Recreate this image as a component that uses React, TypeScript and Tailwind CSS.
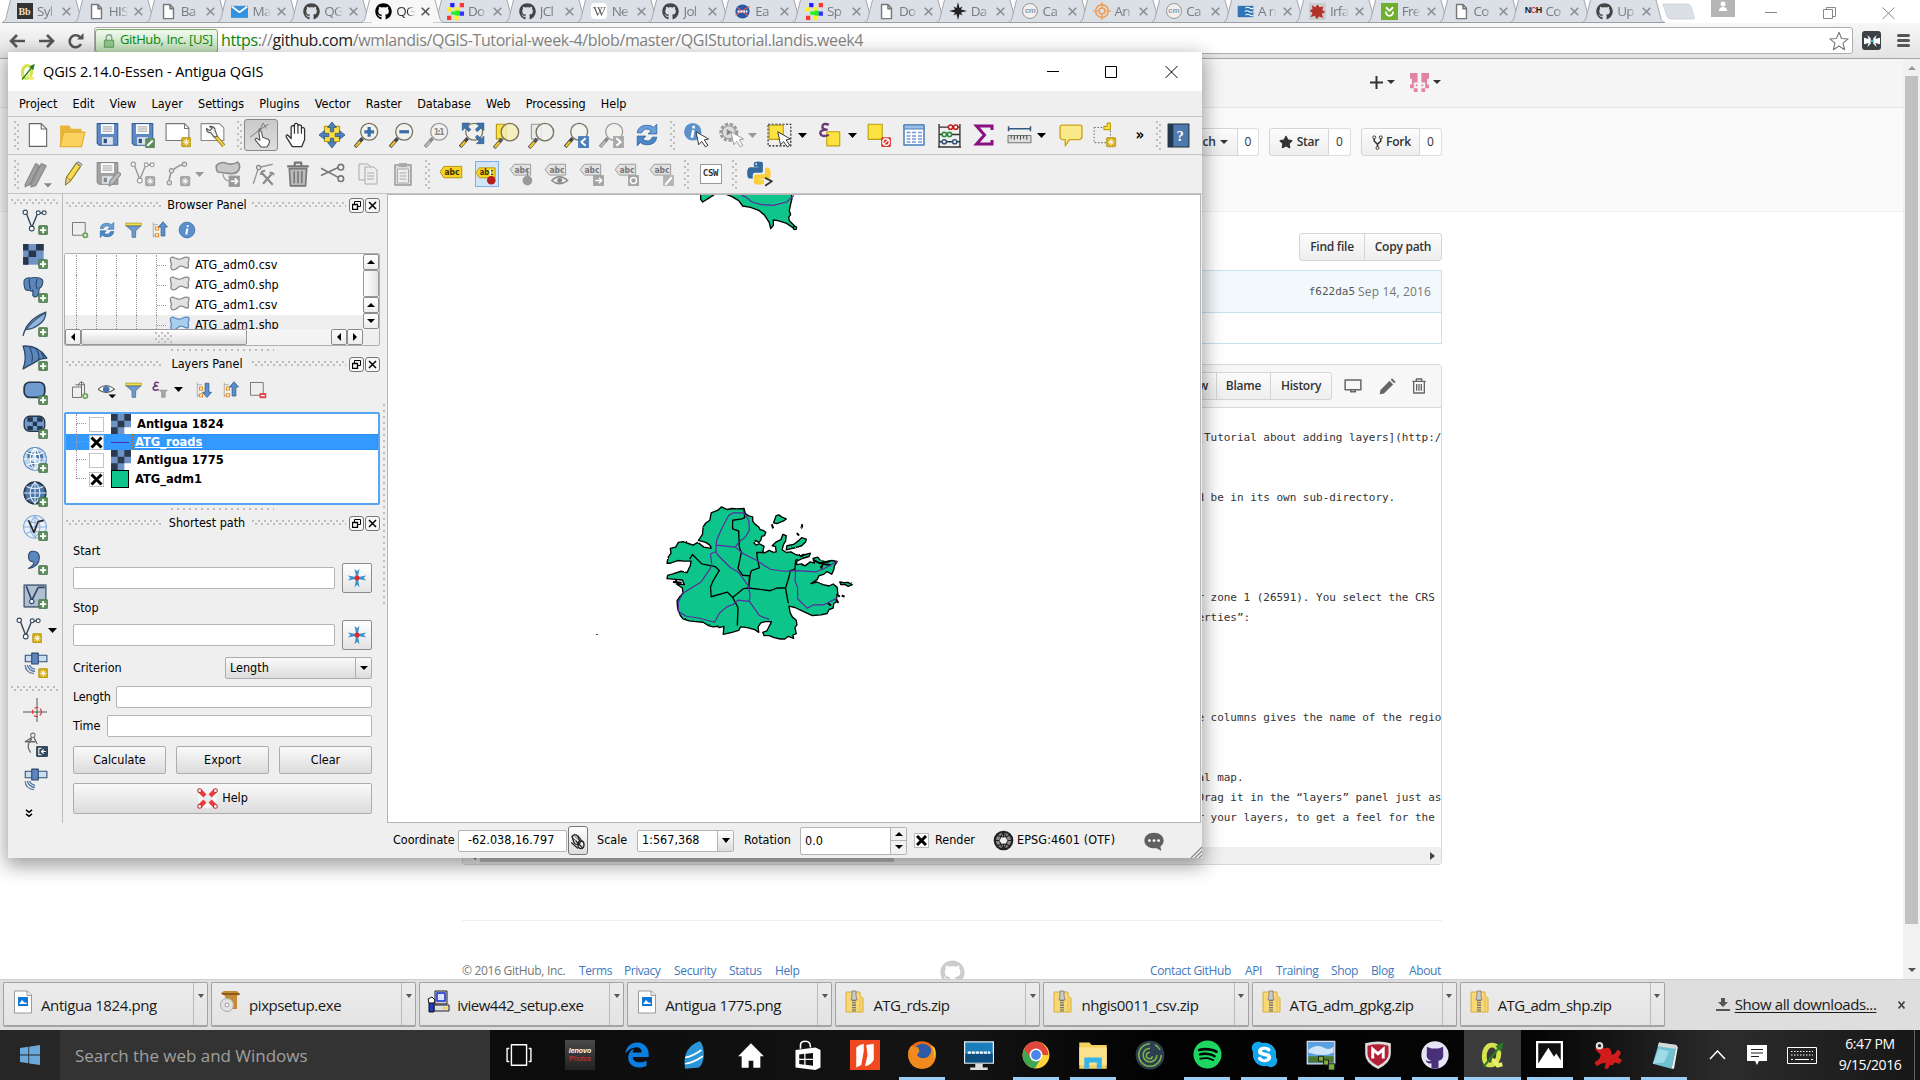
import React from "react";
import { FaGithub, FaWikipediaW, FaSpotify, FaSkype, FaEdgeLegacy, FaStar } from "react-icons/fa";

type Kids = { children?: React.ReactNode };

/* ---------- shared bits ---------- */

function I({ s = 26, vb = "0 0 24 24", children, className = "" }: Kids & { s?: number; vb?: string; className?: string }) {
  return (
    <svg width={s} height={s} viewBox={vb} fill="none" strokeLinejoin="round" className={"shrink-0 " + className}>
      {children}
    </svg>
  );
}

const Plus = ({ x = 15, y = 15 }: { x?: number; y?: number }) => (
  <g transform={`translate(${x} ${y})`}>
    <rect x="0.3" y="0.3" width="8.4" height="8.4" rx="1" fill="#5b8c5a" stroke="#3f6f45" strokeWidth=".6" />
    <path d="M4.5 1.6v5.8M1.6 4.5h5.8" stroke="#fff" strokeWidth="1.8" />
  </g>
);
const Sun = ({ gray = false, x = 15, y = 15 }: { gray?: boolean; x?: number; y?: number }) => (
  <g transform={`translate(${x} ${y})`}>
    <rect x="0.3" y="0.3" width="8.6" height="8.6" rx="1" fill={gray ? "#a5a5a5" : "#d0aa10"} stroke={gray ? "#8c8c8c" : "#a88605"} strokeWidth=".5" />
    <path d="M4.6 1.4v6.4M1.4 4.6h6.4M2.4 2.4l4.4 4.4M6.8 2.4L2.4 6.8" stroke="#fff" strokeWidth=".9" />
  </g>
);
const Cursor = ({ x = 12, y = 9, gray = false }: { x?: number; y?: number; gray?: boolean }) => (
  <path transform={`translate(${x} ${y})`} d="M0 0l2.5 12 2.8-3 3.5 5 2.2-1.5-3.4-5 4-.8z" fill="#fff" stroke={gray ? "#999" : "#333"} strokeWidth=".9" />
);

function Down({ gray = false }: { gray?: boolean }) {
  return (
    <span className="flex w-4 shrink-0 items-center justify-start">
      <svg width="10" height="5" viewBox="0 0 10 5"><path d="M0 0h9l-4.500 5z" fill={gray ? "#999" : "#000"} /></svg>
    </span>
  );
}

const Cell = ({ children }: Kids) => <span className="flex h-9 w-[35px] shrink-0 items-center justify-center">{children}</span>;

const dots =
  "bg-[radial-gradient(circle_at_1px_1px,#bdbdbd_0.9px,transparent_1.3px),radial-gradient(circle_at_4px_4px,#bdbdbd_0.9px,transparent_1.3px)] bg-[length:6px_6px]";
const VGrip = ({ className = "" }: { className?: string }) => <span className={`h-[29px] w-[6px] shrink-0 ${dots} ${className}`} />;
const HGrip = ({ className = "h-[6px]" }: { className?: string }) => <span className={`shrink-0 ${dots} ${className}`} />;

/* ---------- browser tabs ---------- */

const Doc = () => <I s={17}><path d="M5 2h9l5 5.500V22H5zM14 2v6h5" stroke="#777" strokeWidth="2" fill="#fff" /></I>;
const Hub = ({ c = "#444" }: { c?: string }) => <FaGithub size={17} color={c} />;
const Checks = () => (
  <I s={17} vb="0 0 16 16">
    <path d="M3 0h4v4H3z" fill="#22f" /><path d="M12 0h4v4h-4z" fill="#f33" />
    <path d="M0 4h4v4H0zM7 4h4v4H7z" fill="#fe2" /><path d="M4 8h4v3H4zM8 7h4v5H8z" fill="#2e2" />
    <path d="M12 8h4v4h-4z" fill="#33f" /><path d="M0 12h4v4H0z" fill="#f33" /><path d="M7 12h4v4H7z" fill="#fe2" />
  </I>
);
const Cm = () => <span className="flex h-4 w-4 items-center justify-center rounded-full border border-[#999] bg-[#f4efec] font-['Liberation_Sans'] text-[8px] font-bold tracking-tighter text-[#8aa0b0]">cm</span>;

const tabs: { t: string; icon: React.ReactNode; active?: boolean }[] = [
  { t: "Syl", icon: <span className="flex h-4 w-4 items-center justify-center bg-[#333] font-['Liberation_Serif'] text-[10px] font-bold text-[#f5dfb8]">Bb</span> },
  { t: "HIS", icon: <Doc /> },
  { t: "Ba", icon: <Doc /> },
  { t: "Ma", icon: <I s={17}><path d="M0 4h24v17H0z" fill="#3192e0" /><path d="M1 5l11 8 11-8" stroke="#fff" strokeWidth="2.500" /></I> },
  { t: "QG", icon: <Hub /> },
  { t: "QG", icon: <Hub c="#000" />, active: true },
  { t: "Do", icon: <Checks /> },
  { t: "JCl", icon: <Hub /> },
  { t: "Ne", icon: <span className="flex h-4 w-4 items-center justify-center rounded bg-white"><FaWikipediaW size={13} color="#444" /></span> },
  { t: "Jol", icon: <Hub /> },
  { t: "Ea", icon: <I s={17}><circle cx="12" cy="12" r="10" fill="#2758a8" /><path d="M2 17L22 5M4 6l16 12" stroke="#e65a5a" strokeWidth="1.500" /><path d="M5 12h14" stroke="#fff" strokeWidth="3" strokeDasharray="3 1" /></I> },
  { t: "Sp", icon: <Checks /> },
  { t: "Do", icon: <Doc /> },
  { t: "Da", icon: <I s={18}><path d="M12 0l2 8 4-2-2 4 8 2-8 2 2 4-4-2-2 8-2-8-4 2 2-4-8-2 8-2-2-4 4 2z" fill="#222" /></I> },
  { t: "Ca", icon: <Cm /> },
  { t: "An", icon: <I s={18}><circle cx="12" cy="12" r="8.500" stroke="#ef9a4d" strokeWidth="2" /><circle cx="12" cy="12" r="4" stroke="#ef9a4d" strokeWidth="2" /><path d="M12 0v7M12 17v7M0 12h7M17 12h7" stroke="#ef9a4d" strokeWidth="1.600" /></I> },
  { t: "Ca", icon: <Cm /> },
  { t: "A n", icon: <I s={17}><path d="M1 4h22v16H1z" fill="#2f74b5" /><path d="M12 7q3-2 6 0t5 0M11 12q3-2 6 0t5 0M12 17q3-2 6 0t5 0" stroke="#fff" strokeWidth="1.500" /></I> },
  { t: "Irfa", icon: <I s={17}><path d="M0 0h24v24H0z" fill="#ccc" /><path d="M4 3l5 3 3-4 3 4 5-1-1 5 4 3-5 2 2 6-6-2-3 4-3-5-6 2 3-6-4-3 4-3z" fill="#b4312b" /></I> },
  { t: "Fre", icon: <I s={17}><path d="M0 0h24v24H0z" fill="#70ae2e" /><path d="M7 6l5 5 5-5M7 12q0 6 5 6t5-6" stroke="#fff" strokeWidth="2.500" /></I> },
  { t: "Co", icon: <Doc /> },
  { t: "Co", icon: <span className="font-['Liberation_Sans'] text-[9px] font-bold tracking-[-1px] text-[#222]">N<span className="text-[#e2403b]">C</span>H</span> },
  { t: "Up", icon: <Hub /> },
];

function TabStrip() {
  return (
    <div className="flex h-[23px] shrink-0 overflow-hidden bg-white pl-[2px]">
      {tabs.map((t, i) => (
        <div key={i} className={"relative h-[23px] w-[71.830px] shrink-0 " + (t.active ? "z-10" : "")}>
          <svg className="absolute left-0 top-0" width="83" height="23" viewBox="0 0 83 23">
            <path d="M0 22.500C3 22 4 19 5 14L8.500 0H74l4 15c1 5 2 7 5 7.500z" fill={t.active ? "#f7f7f7" : "#dbdfe6"} />
            <path d="M0 22.500C3 22 4 19 5 14L8.500 0M74 0l4 15c1 5 2 7 5 7.500" fill="none" stroke="#a3a6aa" />
            {!t.active && <path d="M0 22.500h83" stroke="#9c9ea1" />}
          </svg>
          <div className="relative flex h-[22px] items-center pl-[14px]">
            <span className="flex w-[17px] shrink-0 items-center justify-center">{t.icon}</span>
            <span className={"ml-1 w-[19px] shrink-0 overflow-hidden whitespace-nowrap font-['Open_Sans'] text-[13.500px] tracking-[-0.7px] [mask-image:linear-gradient(90deg,#000_60%,transparent)] " + (t.active ? "text-[#333]" : "text-[#777b82]")}>{t.t}</span>
            <svg className="ml-[6px] shrink-0" width="9" height="9" viewBox="0 0 9 9"><path d="M.7.7l7.600 7.600M8.300.7L.7 8.300" stroke={t.active ? "#555" : "#8b8e93"} strokeWidth="1.600" /></svg>
          </div>
        </div>
      ))}
      <svg className="ml-[8px] mt-[3px] shrink-0" width="34" height="17" viewBox="0 0 34 17"><path d="M1 1h24q3 0 4 3l3.500 11q0 1-2 1H9q-3 0-4-3L1 1z" fill="#dbdfe6" stroke="#d0d4da" /></svg>
      <div className="ml-[15px] h-[17px] w-6 shrink-0 bg-[#b5b5b5]"><I s={24} vb="0 2 24 24"><circle cx="12" cy="6" r="2.500" fill="#fff" /><path d="M8 13q0-4 4-4t4 4z" fill="#fff" /></I></div>
      <svg className="ml-[30px] mt-[4px] shrink-0" width="130" height="16" viewBox="0 0 130 16" fill="none" stroke="#888"><path d="M0 8.500h12M58.500 5.500h9v9h-9zM61.500 5v-1.500h9v9h-2.500M117.500 3.500l12 11.500M129.500 3.500l-12 11.500" /></svg>
    </div>
  );
}

function AddressBar() {
  return (
    <div className="flex h-9 shrink-0 items-center border-b border-[#a5a5a5] bg-gradient-to-b from-[#f7f7f7] to-[#e4e4e4]">
      <svg className="ml-[9px] shrink-0" width="76" height="18" viewBox="0 0 76 18" fill="none" stroke="#555" strokeWidth="2.600">
        <path d="M16 9H2M8 3L2 9l6 6M30 9h14M38 3l6 6-6 6" /><path d="M72 12a6 6 0 1 1-.6-6.500" /><path d="M74.500 1v6.500H68z" fill="#555" stroke="none" />
      </svg>
      <div className="ml-[9px] flex h-[27px] w-[1759px] shrink-0 items-center rounded-[3px] border border-[#acacac] bg-white">
        <span className="flex h-[24px] w-[123px] items-center rounded-[3px] border border-[#6fae5c] bg-gradient-to-b from-[#f1f8ef] to-[#bfe0b6] pl-[6px]">
          <I s={14} vb="0 0 14 18"><path d="M3.500 8V4.500a3.500 3.500 0 0 1 7 0V8" stroke="#84a884" strokeWidth="1.800" /><path d="M1 8h12v9H1z" fill="#8fc78a" stroke="#4a8a45" /></I>
          <span className="ml-[4px] whitespace-nowrap pb-px font-['Open_Sans'] text-[13px] tracking-[-0.4px] text-[#0b8a0b]">GitHub, Inc. [US]</span>
        </span>
        <span className="ml-[3px] grow whitespace-nowrap pb-[2px] font-['Open_Sans'] text-[16px] tracking-[-0.39px] text-[#848484]">
          <span className="text-[#0b8a0b]">https</span>://<span className="text-[#222]">github.com</span>/wmlandis/QGIS-Tutorial-week-4/blob/master/QGIStutorial.landis.week4
        </span>
        <I s={20} className="mr-[3px]"><path d="M12 1.500l3 7.500 8 .5-6.200 5 2 8L12 18l-6.800 4.500 2-8L1 9.500 9 9z" stroke="#777" strokeWidth="1.300" /></I>
      </div>
      <span className="ml-[9px] flex h-[19px] w-[19px] items-center justify-center rounded-[3px] bg-[#3d4145]"><I s={16}><path d="M0 7l7 2-2-6 5 5v8l-5 5 2-6-7 2zM24 7l-7 2 2-6-5 5v8l5 5-2-6 7 2z" fill="#fff" /><circle cx="12" cy="12" r="2" fill="#3bc" /></I></span>
      <span className="ml-4 flex w-[13px] flex-col gap-[2px]"><i className="h-[3px] rounded bg-[#555]" /><i className="h-[3px] rounded bg-[#555]" /><i className="h-[3px] rounded bg-[#555]" /></span>
    </div>
  );
}

/* ---------- web page ---------- */

const ghBtn = "flex items-center justify-center border border-[#d5d5d5] bg-gradient-to-b from-[#fcfcfc] to-[#eee] font-['Open_Sans'] text-[12px] font-semibold text-[#333] whitespace-nowrap tracking-[-0.25px]";
const Caret = () => <svg className="ml-1" width="8" height="4" viewBox="0 0 8 4"><path d="M0 0h8L4 4z" fill="#333" /></svg>;

const code = [
  "[Tutorial about adding layers](http:/", "", "", "d be in its own sub-directory.", "", "", "", "",
  "r zone 1 (26591). You select the CRS (", "erties”:", "", "", "", "", "e columns gives the name of the regio", "", "",
  "al map.", "Drag it in the “layers” panel just as", "r your layers, to get a feel for the ", "",
];

function WebPage() {
  return (
    <div className="flex h-[920px] shrink-0 overflow-hidden bg-white">
      <div className="flex h-[920px] w-[1903px] shrink-0 flex-col">
        <div className="flex h-[49px] shrink-0 items-center border-b border-[#e5e5e5] bg-[#f5f5f5] pb-[2px] pl-[1370px]">
          <svg width="13" height="13" viewBox="0 0 13 13"><path d="M6.500 0v13M0 6.500h13" stroke="#333" strokeWidth="2" /></svg>
          <Caret />
          <svg className="ml-[15px]" width="19" height="19" viewBox="0 0 10 10" fill="#df84a3"><path d="M0 0h4v3H0zM6 0h4v3H6zM1 3h3v2H2v1H1zM6 3h3v3H8V5H6zM0 6h2v2H0zM8 6h2v2H8zM2 8h2v2H2zM6 8h2v2H6zM3 6h1v1H3zM6 6h1v1H6z" /></svg>
          <Caret />
        </div>
        <div className="flex h-[104px] shrink-0 items-start border-b border-[#eee] bg-[#fafafa] pt-5">
          <div className={ghBtn + " ml-[1160px] h-7 w-[78px] pl-[32px]"}>ch<Caret /></div>
          <div className="flex h-7 w-[21px] items-center justify-center rounded-r-[3px] border border-l-0 border-[#ddd] bg-white font-['Open_Sans'] text-[12px] text-[#333]">0</div>
          <div className={ghBtn + " ml-[10px] h-7 w-[60px] gap-1 rounded-l-[3px]"}><FaStar size={14} />Star</div>
          <div className="flex h-7 w-[22px] items-center justify-center rounded-r-[3px] border border-l-0 border-[#ddd] bg-white font-['Open_Sans'] text-[12px] text-[#333]">0</div>
          <div className={ghBtn + " ml-[10px] h-7 w-[59px] gap-px rounded-l-[3px]"}>
            <I s={15} vb="0 0 12 16"><path d="M2.500 4v2.500L6 10v2.500M9.500 4v2.500L6 10" stroke="#333" strokeWidth="1.600" /><circle cx="2.500" cy="2.500" r="1.600" stroke="#333" /><circle cx="9.500" cy="2.500" r="1.600" stroke="#333" /><circle cx="6" cy="13.800" r="1.600" stroke="#333" /></I>Fork
          </div>
          <div className="flex h-7 w-[22px] items-center justify-center rounded-r-[3px] border border-l-0 border-[#ddd] bg-white font-['Open_Sans'] text-[12px] text-[#333]">0</div>
        </div>
        <div className="ml-[462px] flex w-[980px] flex-col">
          <div className="mt-[21px] flex h-[28px] justify-end">
            <div className={ghBtn + " w-[66px] rounded-l-[3px]"}>Find file</div>
            <div className={ghBtn + " -ml-px w-[78px] rounded-r-[3px]"}>Copy path</div>
          </div>
          <div className="mt-[9px] flex h-[74px] flex-col border border-[#c5e2ef]">
            <div className="flex h-[42px] items-center justify-end border-b border-[#c5e2ef] bg-[#f2f9fc] pr-[10px] text-[12px] text-[#767676]">
              <span className="mr-[3px] pt-[2px] font-['DejaVu_Sans_Mono'] text-[11px] text-[#555]">f622da5</span>
              <span className="font-['Open_Sans'] text-[12px] tracking-[0.15px]">Sep 14, 2016</span>
            </div>
          </div>
          <div className="mt-5 flex h-[501px] flex-col rounded-[3px] border border-[#d8d8d8]">
            <div className="flex h-[43px] shrink-0 items-center justify-end border-b border-[#d8d8d8] bg-[#f7f7f7] pr-[14px]">
              <div className={ghBtn + " h-7 w-[60px] justify-end pr-2"}>Raw</div>
              <div className={ghBtn + " -ml-px h-7 w-[55px]"}>Blame</div>
              <div className={ghBtn + " -ml-px h-7 w-[62px] rounded-r-[3px]"}>History</div>
              <I s={18} className="ml-[12px]"><path d="M1.500 4h21v13h-21zM9 17v2.500h6V17" stroke="#666" strokeWidth="2" /></I>
              <I s={17} className="ml-[17px]"><path d="M1 23l1-6L15 4l5 5L7 22zM16.500 2.500l2-2 5 5-2 2z" fill="#666" /></I>
              <I s={16} className="ml-[15px]"><path d="M2 5h20M8 4V1.500h8V4M4 5v17.500h16V5M8.500 9v10M12 9v10M15.500 9v10" stroke="#666" strokeWidth="2" /></I>
            </div>
            <div className="h-[439px] shrink-0 overflow-hidden pl-[734.400px] pt-[20px] font-['DejaVu_Sans_Mono'] text-[11px] leading-[20px] tracking-[-0.03px] text-[#333]">
              {code.map((l, i) => <div key={i} className="h-5 whitespace-pre">{l}</div>)}
            </div>
            <div className="flex h-[17px] items-center bg-[#f0f0f0] pl-2">
              <svg width="5" height="8"><path d="M5 0v8L0 4z" fill="#555" /></svg>
              <span className="ml-1 h-[13px] w-[414px] bg-[#c1c1c1]" />
              <svg className="ml-auto mr-[6px]" width="5" height="8"><path d="M0 0v8l5-4z" fill="#444" /></svg>
            </div>
          </div>
          <div className="mt-[55px] flex h-[102px] items-end border-t border-[#eee] font-['Open_Sans'] text-[12px] text-[#4078c0]">
            <div className="flex h-[60px] w-full items-start">
              <span className="w-[117px] whitespace-nowrap tracking-[-0.3px] text-[#767676]">© 2016 GitHub, Inc.</span>
              <span className="w-[45px] tracking-[-0.4px]">Terms</span><span className="w-[50px] tracking-[-0.45px]">Privacy</span><span className="w-[55px] tracking-[-0.3px]">Security</span><span className="w-[46px] tracking-[-0.4px]">Status</span><span className="w-[165px] tracking-[-0.4px]">Help</span>
              <FaGithub size={25} color="#ccc" className="-mt-[2px]" />
              <span className="ml-auto w-[95px] whitespace-nowrap tracking-[-0.35px]">Contact GitHub</span><span className="w-[31px] tracking-[-0.4px]">API</span><span className="w-[55px] tracking-[-0.4px]">Training</span><span className="w-[40px] tracking-[-0.4px]">Shop</span><span className="w-[38px] tracking-[-0.4px]">Blog</span><span className="w-[33px] tracking-[-0.4px]">About</span>
            </div>
          </div>
        </div>
      </div>
      <div className="flex w-[17px] shrink-0 flex-col items-center bg-[#f1f1f1]">
        <svg className="mt-[7px]" width="8" height="4"><path d="M0 4h8L4 0z" fill="#999" /></svg>
        <span className="mt-[6px] h-[848px] w-[13px] bg-[#c1c1c1]" />
        <svg className="mt-[44px]" width="8" height="4"><path d="M0 0h8L4 4z" fill="#555" /></svg>
      </div>
    </div>
  );
}

/* ---------- downloads shelf ---------- */

const Png = () => <I s={24}><path d="M3.500 1h13l4 4v18h-17z" fill="#fff" stroke="#999" /><path d="M16 1v4.500h4.500" stroke="#999" fill="#eee" /><path d="M7 7h10v9H7z" fill="#0a78d6" /><path d="M8 14l3-4 3 3 1-1 1 2z" fill="#fff" /></I>;
const Zip = () => <I s={24}><path d="M3 2h14v4l3 2v14H3z" fill="#f8d775" stroke="#d8ae3c" /><path d="M17 8v14" stroke="#e4bd50" /><path d="M9 1h4v5l1 4h-6l1-4z" fill="#ccc" stroke="#777" strokeWidth=".8" /><path d="M11 10v12" stroke="#777" strokeWidth="4" strokeDasharray="1.300 1" /></I>;
const Setup = () => <I s={24}><path d="M2 3l3-2h13l3 3-3 2v13H9L6 6z" fill="#c58a34" /><path d="M2 3h18l1 2H4z" fill="#8d5b18" /><circle cx="8" cy="15" r="6.500" fill="#e2e2e2" stroke="#aaa" /><circle cx="8" cy="15" r="2" fill="#fff" stroke="#999" /></I>;
const Pc = () => <I s={24}><path d="M8 1h12v13H8z" fill="#ccc" stroke="#222" /><path d="M10 3h8v8h-8z" fill="#dfe3ff" stroke="#1730d8" strokeWidth="1.500" /><path d="M7 15h15v6H7z" fill="#ddd" stroke="#222" /><path d="M2 12h5v10H2z" fill="#2438d0" stroke="#111" /><path d="M1 9l4-2 3 3-1 3H2z" fill="#fff" stroke="#111" /><path d="M16 18h4" stroke="#fc0" strokeWidth="1.500" /></I>;

const downloads: [string, React.ReactNode, string][] = [
  ["Antigua 1824.png", <Png />, "tracking-[-0.4px]"], ["pixpsetup.exe", <Setup />, "tracking-[-0.45px]"], ["iview442_setup.exe", <Pc />, "tracking-[-0.5px]"], ["Antigua 1775.png", <Png />, "tracking-[-0.4px]"],
  ["ATG_rds.zip", <Zip />, "tracking-[-0.5px]"], ["nhgis0011_csv.zip", <Zip />, "tracking-[-0.42px]"], ["ATG_adm_gpkg.zip", <Zip />, "tracking-[-0.4px]"], ["ATG_adm_shp.zip", <Zip />, "tracking-[-0.6px]"],
];

function Shelf() {
  return (
    <div className="flex h-[51px] shrink-0 items-center border-t border-[#cfcfcf] bg-[#dedede] pb-px pl-[3px] font-['Open_Sans'] text-[15px] text-[#1a1a1a]">
      {downloads.map(([n, icon, tr]) => (
        <div key={n} className="mr-[3px] flex h-[45px] w-[205.100px] shrink-0 items-stretch rounded-[2px] border border-b-2 border-[#a3a3a3] bg-gradient-to-b from-[#ececec] to-[#e3e3e3]">
          <span className="flex grow pl-[7px] pt-[7px]">{icon}<span className={"ml-[6px] mt-[5px] whitespace-nowrap leading-5 " + tr}>{n}</span></span>
          <span className="flex w-[14px] justify-center border-l border-[#bbb] pt-[11px]"><svg width="6" height="4"><path d="M0 0h6L3 4z" fill="#555" /></svg></span>
        </div>
      ))}
      <svg className="ml-[48px] shrink-0" width="14" height="16" viewBox="0 0 14 16"><path d="M5 1h4v4h3L7 10 2 5h3zM0 12h14v2H0z" fill="#555" /></svg>
      <span className="ml-[5px] whitespace-nowrap tracking-[-0.4px] underline underline-offset-2">Show all downloads...</span>
      <svg className="ml-[22px] shrink-0" width="7" height="8" viewBox="0 0 7 8"><path d="M.5.5l6 7M6.500.5l-6 7" stroke="#444" strokeWidth="1.600" /></svg>
    </div>
  );
}

/* ---------- taskbar ---------- */

const QLogo = ({ s = 28 }: { s?: number }) => (
  <I s={s}><path d="M11 3.500C7 3.500 4.500 8 4.500 13s2 7.500 5 7.500c5 0 7.500-5 7.500-10 0-4-2-7-6-7z" stroke="#d4e34e" strokeWidth="4.200" /><path d="M11 16q3 1 5 5l4-1" stroke="#e9ef6a" strokeWidth="3.500" /><path d="M4 22L17 6" stroke="#2b7a22" strokeWidth="1.800" /><path d="M21 1l-7 3.500 5 5z" fill="#2b7a22" /></I>
);

const apps: { icon: React.ReactNode; run?: boolean; active?: boolean }[] = [
  { icon: <I s={26}><path d="M5 2.500h14v19H5zM3 6H1v12h2M21 6h2v12h-2" stroke="#fff" strokeWidth="1.300" /></I> },
  { icon: <span className="flex h-[30px] w-[30px] flex-col items-center justify-center bg-gradient-to-b from-[#4a4a4a] to-[#222] font-['Liberation_Sans'] text-[7px] font-bold italic leading-[8px] text-white">lenovo<span className="font-normal not-italic text-[#d33]">Photos</span></span> },
  { icon: <FaEdgeLegacy size={26} color="#0b7fe0" /> },
  { icon: <I s={30}><path d="M5 23C3 14 6 4 17 1c4 5 4 17-1 21z" fill="#2c95d8" /><path d="M5 14q6-1 13-6M5 19q7-1 14-6" stroke="#fff" strokeWidth="1.300" /></I> },
  { icon: <I s={28}><path d="M12 2L1 13h3v10h6v-6h4v6h6V13h3z" fill="#fff" /></I> },
  { icon: <I s={30}><path d="M2 8l16-2 4 2v14l-4 2-16-2z" fill="#fff" /><path d="M6 7V4q0-3 4-3t4 5" stroke="#fff" strokeWidth="1.300" /><path d="M5 11.500l4-.5v4H5zM10 11l6-.7V15h-6zM5 16h4v3.700l-4-.5zM10 16h6v4.600l-6-.8z" fill="#111" /></I> },
  { icon: <I s={30}><path d="M0 0h24v24H0z" fill="#f0491f" /><path d="M5 6q2-2 6-3v6l-2 11-4 2zM13 4l6-1v13q-2 4-7 5l2-9z" fill="#fff" /></I> },
  { run: true, icon: <I s={30}><circle cx="12" cy="12" r="11" fill="#e66a1c" /><circle cx="12.500" cy="10.500" r="7.500" fill="#2b5aa8" /><path d="M1 9Q3 3 5 5l4 1 1 3-2 3q3 4 8 2 5-4 3-10 5 5 4 10-2 9-11 9T1 14z" fill="#f08a1e" /><path d="M19 4q4 5 2 11 3-4 1-9z" fill="#fcd23a" /></I> },
  { icon: <I s={30}><path d="M0 1h24v18H0z" fill="#e8eef2" /><path d="M1 2h22v16H1z" fill="#1b7db9" /><path d="M1 11h22v7H1z" fill="#0d4f80" /><path d="M3 10h18" stroke="#fff" strokeWidth="1.800" strokeDasharray="2.500 .7" /><path d="M9 19h6v3h4v2H5v-2h4z" fill="#ddd" /></I> },
  { run: true, icon: <I s={28}><circle cx="12" cy="12" r="11.500" fill="#fdd23b" /><path d="M12 .5A11.500 11.500 0 0 0 1.700 7l5.200 9.500L12 12h10.500A11.500 11.500 0 0 0 12 .5z" fill="#e1473d" /><path d="M1.700 7A11.500 11.500 0 0 0 11 23.500l5.500-9L7 14z" fill="#3fa652" /><circle cx="12" cy="12" r="5.500" fill="#fff" /><circle cx="12" cy="12" r="4.200" fill="#4a86e8" /></I> },
  { run: true, icon: <I s={30}><path d="M1 2h8l2 2h12v19H1z" fill="#f6cf62" /><path d="M1 6h22v14H1z" fill="#fde28e" /><path d="M5 14h14v9h-4v-5H9v5H5z" fill="#35b4ea" /></I> },
  { icon: <I s={30}><circle cx="12" cy="12" r="11.500" fill="#2c3e50" /><path d="M12 3a9 9 0 1 0 9 9M12 6.500a5.500 5.500 0 1 0 5.500 5.500M16 3.800A9 9 0 0 1 20 8M12 10a2.500 2.500 0 1 0 2 3" stroke="#7fb34a" strokeWidth="1.200" /></I> },
  { run: true, icon: <FaSpotify size={29} color="#1ed760" /> },
  { run: true, icon: <FaSkype size={29} color="#12a5ec" className="[background:radial-gradient(circle,#fff_55%,transparent_56%)]" /> },
  { run: true, icon: <I s={30}><path d="M1 1h22v18H1z" fill="#5aa0e0" stroke="#dde" /><path d="M2 13h20v5H2z" fill="#4a7a2a" /><path d="M2 8q6-5 12-2t8-1v5q-8 4-20 0z" fill="#cfe6fa" /><path d="M10 13h4v4h-4zM14 16h4v4h-4zM18 19h5v5h-5z" fill="#7cae3c" stroke="#222" strokeWidth=".8" /></I> },
  { run: true, icon: <I s={28}><path d="M1 2q11-3 22 0v9q0 8-11 13Q1 19 1 11z" fill="#ddd" /><path d="M3 4q9-2.500 18 0v7q0 6-9 10.500Q3 17 3 11z" fill="#b51f35" /><path d="M7.500 15V7l4.500 4 4.500-4v8" stroke="#fff" strokeWidth="2.500" strokeLinejoin="miter" /></I> },
  { run: true, icon: <I s={28}><circle cx="12" cy="12" r="11.700" fill="#e6e4f5" /><path d="M5 5l4 1.500h6L19 5v5q1 6-4 7v6.500H9V19q-4 1-5-3 2 2 5 1-5-1-4-7z" fill="#48307a" /></I> },
  { active: true, run: true, icon: <QLogo /> },
  { run: true, icon: <I s={27}><path d="M0 0h24v24H0z" fill="#fff" /><path d="M2 2h20v15l-4-6-2 3-5-8-9 14z" fill="#111" /></I> },
  { run: true, icon: <I s={30}><path d="M3 4l4-1 3 4q3-2 5 1l1 4q3-1 4-4 3 0 3 3l-2 3 3 2-2 3-4-1q-1 3-4 2l-1 3h-3l1-5-4 1-3 2-2-3 4-3 1-3-4-4z" fill="#d11c1c" /><circle cx="6" cy="4.500" r="3" fill="#ddd" /><circle cx="6" cy="4.500" r="1.300" fill="#222" /></I> },
  { run: true, icon: <I s={30}><path d="M8 2l14 2-4 19-15-4z" fill="#6fc0d0" /><path d="M8 2l14 2-1 3L7 5z" fill="#d8d8d8" /><path d="M22 4l1 2-3 17-2 0z" fill="#eee" /><path d="M8 7l8 2-4 9-9 1z" fill="#9edbe6" /></I> },
];

function Taskbar() {
  return (
    <div className="flex h-[50px] shrink-0 bg-[linear-gradient(90deg,#1c1c1c_0,#0c0c0c_27%,#141414_50%,#020202_60%,#050505_80%,#2c2c2c_90%,#161616_100%)]">
      <div className="flex w-[60px] shrink-0 items-center justify-center bg-[#262626]">
        <I s={20}><path d="M0 3.500l10-1.400V11.500H0zM11 2l13-2v11.500H11zM0 12.500h10V22L0 20.500zM11 12.500h13V24l-13-1.900z" fill="#6ba9da" /></I>
      </div>
      <div className="flex w-[430px] shrink-0 items-center bg-[#333] pl-[15px] pt-px font-['Open_Sans'] text-[17px] tracking-[-0.03px] text-[#a0a0a0]">Search the web and Windows</div>
      <div className="flex w-[1203px] shrink-0">
        {apps.map((a, i) => (
          <div key={i} className={"flex shrink-0 flex-col items-center " + (i === 0 ? "mr-[4.500px] w-[57px] " : "w-[57.040px] ") + (a.active ? "bg-[#3b3b3b]" : "")}>
            <span className="flex h-[47px] items-center justify-center pt-[2px]">{a.icon}</span>
            {a.run && <span className={"h-[3px] bg-[#9bcdf5] " + (a.active ? "w-full" : "w-[46px]")} />}
          </div>
        ))}
      </div>
      <div className="flex grow items-center text-white">
        <svg className="ml-[16px] shrink-0" width="17" height="10"><path d="M1 9l7.500-8L16 9" stroke="#fff" fill="none" strokeWidth="1.500" /></svg>
        <svg className="ml-[21px] shrink-0" width="20" height="20"><path d="M0 0h20v16h-8l-2 4-2-4H0z" fill="#fff" /><path d="M4 4.500h12M4 8h12M4 11.500h8" stroke="#222" /></svg>
        <svg className="ml-[20px] shrink-0" width="30" height="17" fill="none" stroke="#fff"><path d="M.5.5h29v16H.5z" /><path d="M4 4.500h22M4 8h22" strokeDasharray="1.500 1.500" /><path d="M4 12.500h2M8 12.500h14M24 12.500h2" /></svg>
        <div className="ml-[17px] flex w-[72px] shrink-0 flex-col items-center whitespace-nowrap pb-[3px] font-['Open_Sans'] text-[14px] leading-[21px] tracking-[-0.4px]"><span>6:47 PM</span><span>9/15/2016</span></div>
        <span className="ml-auto h-full w-[6px] border-l border-[#666]" />
      </div>
    </div>
  );
}

/* ---------- QGIS toolbars ---------- */

const Mag = ({ gray = false, fill = "#f1f1ee", children }: Kids & { gray?: boolean; fill?: string }) => (
  <I s={26}>
    <path d="M1 23l7-8" stroke={gray ? "#888" : "#444"} strokeWidth="3.200" /><path d="M1.600 22.500l4-4.500" stroke={gray ? "#bbb" : "#f6c321"} strokeWidth="2" />
    <circle cx="14" cy="9" r="7.800" fill={fill} fillOpacity=".8" stroke={gray ? "#9a9a9a" : "#77715f"} strokeWidth="1.200" />
    {children}
  </I>
);
const Save = ({ gray = false, children }: Kids & { gray?: boolean }) => (
  <I s={26}><path d="M2 1.500h19v20H4l-2-2z" fill={gray ? "#a3a3a3" : "#5d88c4"} stroke={gray ? "#888" : "#345d94"} /><path d="M5.500 2h12v9h-12z" fill="#fff" /><path d="M7 4.500h9M7 6.500h9M7 8.500h9" stroke="#888" strokeWidth=".8" /><path d="M6.500 14h10v7h-10z" fill="#dde3ea" /><path d="M8 15.500h3v4H8z" fill={gray ? "#888" : "#2b4f80"} />{children}</I>
);
const Label = ({ yellow = false, s = 26, children }: Kids & { yellow?: boolean; s?: number }) => (
  <I s={s}>
    <path d={yellow ? "M1 10l3.500-5H21v10.500H4.500z" : "M1 8l4-5h15v10H5z"} fill={yellow ? "#f6d321" : "#e2e2e2"} stroke={yellow ? "#b39515" : "#9a9a9a"} strokeWidth=".9" />
    <text x="5" y={yellow ? 13 : 11} fontSize="8.500" fontWeight="bold" fontFamily="DejaVu Sans Condensed" fill={yellow ? "#3a3000" : "#777"} textLength="14" lengthAdjust="spacingAndGlyphs">abc</text>
    {children}
  </I>
);
const Refresh = ({ s = 26 }: { s?: number }) => <I s={s}><path d="M3 10q1-7 9-7 4 0 6 2l3-3v9h-8l3-3q-6-4-9 2z" fill="#6aa0d8" stroke="#2f66a8" strokeWidth=".8" /><path d="M21 14q-1 7-9 7-4 0-6-2l-3 3v-9h8l-3 3q6 4 9-2z" fill="#4b86c6" stroke="#2f66a8" strokeWidth=".8" /></I>;
const Info = ({ s = 20 }: { s?: number }) => <I s={s}><circle cx="12" cy="12" r="10.500" fill="#5b90cc" stroke="#3a6ba6" /><path d="M13 5.500v2.500M12.500 10l-1.500 8" stroke="#fff" strokeWidth="2.600" /></I>;
const Funnel = () => <I s={17}><path d="M1 3h22v4H1z" fill="#f7df4a" stroke="#a98e12" /><path d="M2 7h20l-7 7v9H10v-9z" fill="#6f9bd1" stroke="#3a618f" /></I>;
const Tree = ({ up = true }: { up?: boolean }) => <I s={18}><path d="M3 2v20M3 5h6M3 19h6" stroke="#999" /><path d="M6 8h4v4H6zM6 17h4v4H6z" fill="#fff" stroke="#f08a1a" strokeWidth="1.600" /><path d={up ? "M16 1l6 7h-3.500v12h-5V8H10z" : "M16 22l6-7h-3.500V3h-5v12H10z"} fill="#5b90cc" stroke="#2f5a90" /></I>;
const VLine = ({ c = "#34495e", children }: Kids & { c?: string }) => <I s={26}><path d="M4 4l5 13 5-12 6-2" stroke={c} strokeWidth="1.300" /><circle cx="3" cy="3" r="2" fill="#fff" stroke={c} /><circle cx="9" cy="18" r="2.200" fill="#fff" stroke={c} /><circle cx="15" cy="3.500" r="1.800" fill="#fff" stroke={c} /><circle cx="20.500" cy="3.500" r="1.800" fill="#fff" stroke={c} />{children}</I>;
const Hand = () => <I s={28}><path d="M8 22l-5-8q-1-2 1-2l3 3V5q1.500-2 2.800 0V3q1.500-2 3 0v1q1.500-1.500 3 0v2q2-1 2.700 1v9l-2.500 6z" fill="#fff" stroke="#333" strokeWidth="1.100" /><path d="M9.800 5v6M12.800 4v7M15.800 6v5" stroke="#333" /></I>;
const Eps = () => <path d="M11 2.500q-6-2-6 2 0 2 4 2.500-6 0-6 3.500 1 4 8 1.500" stroke="#6b3a73" strokeWidth="2.200" />;

function Toolbars() {
  return (
    <>
      <div className="flex h-[39px] shrink-0 items-center border-b border-t border-[#c3c3c3] pb-px">
        <VGrip className="ml-[6px]" />
        <Cell><I><path d="M4 1.500h11l5 5v16H4z" fill="#fff" stroke="#666" /><path d="M15 1.500v5h5" stroke="#666" /></I></Cell>
        <Cell><I s={27}><path d="M1 3h8l2 3h9v16H1z" fill="#e8b73a" /><path d="M4 9h19l-3 13H1z" fill="#fbd25d" stroke="#e0ad2e" /></I></Cell>
        <Cell><Save /></Cell>
        <Cell><Save><rect x="14" y="15" width="9" height="9" rx="1" fill="#5b8c5a" /><path d="M16 22l5-5" stroke="#fff" strokeWidth="2" /></Save></Cell>
        <Cell><I><path d="M1 1.500h17l4 4V17H1z" fill="#fff" stroke="#777" /><path d="M18 1.500V6h4" stroke="#777" /><Sun x={15} y={14} /></I></Cell>
        <Cell><I><path d="M1 1.500h17l4 4V17H1z" fill="#fff" stroke="#888" /><path d="M14 13l8 9" stroke="#8b7120" strokeWidth="3.500" /><path d="M14 13l8 9" stroke="#f2cd45" strokeWidth="2" /><path d="M9 4q5 0 5 4l2 5-3 1-3-4q-4 0-4-4l3 2 2-2z" fill="#eee" stroke="#555" /></I></Cell>
        <VGrip className="ml-[7px] mr-px" />
        <span className="flex h-8 w-[34px] shrink-0 items-center justify-center rounded-[3px] border border-[#888] bg-gradient-to-b from-[#c9c9c9] to-[#dedede]">
          <I s={26}><path d="M12 23l-5-6q-1-2 1-2l3 2-1-8q1-2 2.500 0l1 5 5 2q2 1 1 4l-2 3z" fill="#fff" stroke="#555" /><path d="M2 14l9-7 3-6 3 5M11 7l8-5" stroke="#777" strokeWidth=".9" /><circle cx="11" cy="7" r="1.300" fill="#777" /></I>
        </span>
        <span className="w-px shrink-0" />
        <Cell><Hand /></Cell>
        <Cell><I><path d="M5 4h14v14H5z" fill="#f8df3f" stroke="#b59a10" /><path d="M12 0l4 5h-2.500v4h-3V5H8zM12 24l4-5h-2.500v-4h-3v4H8zM0 12l5-4v2.500h4v3H5V16zM24 12l-5-4v2.500h-4v3h4V16z" fill="#4f7fb8" stroke="#2a5284" strokeWidth=".7" /></I></Cell>
        <Cell><Mag><path d="M14 4.500v9M9.500 9h9" stroke="#3e6ea8" strokeWidth="3" /></Mag></Cell>
        <Cell><Mag><path d="M9.500 9h9" stroke="#3e6ea8" strokeWidth="3" /></Mag></Cell>
        <Cell><Mag gray><text x="9" y="12" fontSize="8" fontFamily="DejaVu Sans Condensed" fontWeight="bold" fill="#888" textLength="10">1:1</text></Mag></Cell>
        <Cell><Mag><path d="M3 1h7L7.500 3.500 11 7 9 9 5.500 5.500 3 8zM23 1v7l-2.500-2.500L17 9l-2-2 3.500-3.500L16 1zM23 20h-7l2.500-2.500L15 14l2-2 3.500 3.500L23 13z" fill="#3e72ad" stroke="#264f80" strokeWidth=".5" /></Mag></Cell>
        <Cell><I s={27}><path d="M3 2h9v13H3z" fill="#f8e045" stroke="#b39a12" /><path d="M1 23l7-8" stroke="#555" strokeWidth="3.200" /><path d="M1.600 22.500l4-4.500" stroke="#f6c321" strokeWidth="2" /><circle cx="15" cy="9" r="7.800" fill="#f3eeb9" fillOpacity=".85" stroke="#77715f" strokeWidth="1.200" /></I></Cell>
        <Cell><I s={27}><path d="M3 2h9v13H3z" fill="#e9e9e9" stroke="#999" /><path d="M1 23l7-8" stroke="#555" strokeWidth="3.200" /><path d="M1.600 22.500l4-4.500" stroke="#f6c321" strokeWidth="2" /><circle cx="15" cy="9" r="7.800" fill="#f1f1ee" fillOpacity=".85" stroke="#77715f" strokeWidth="1.200" /></I></Cell>
        <Cell><Mag><path d="M13 13h10v11H13z" fill="#4a7eb8" /><path d="M20 15l-4 3.500 4 3.500" stroke="#fff" strokeWidth="1.800" /></Mag></Cell>
        <Cell><Mag gray><path d="M13 13h10v11H13z" fill="#a8a8a8" /><path d="M16 15l4 3.500-4 3.500" stroke="#fff" strokeWidth="1.800" /></Mag></Cell>
        <Cell><Refresh /></Cell>
        <VGrip className="ml-[6px] mr-[2px]" />
        <Cell><I s={26}><circle cx="9" cy="9" r="8" fill="#5b90cc" /><path d="M9.800 3.500v2.500M9.500 7.500l-1.300 7" stroke="#fff" strokeWidth="2.400" /><Cursor x={12} y={9} /></I></Cell>
        <Cell><I s={26}><circle cx="10" cy="9.500" r="7.500" stroke="#999" strokeWidth="2.500" strokeDasharray="3 1.500" /><circle cx="10" cy="9.500" r="6" fill="#ddd" stroke="#999" /><path d="M8 6.500l5 3-5 3z" fill="#888" /><Cursor gray x={12} y={9} /></I></Cell>
        <span className="-mr-[1.500px] flex"><Down gray /></span>
        <Cell><I s={26}><path d="M1 2h21v20H1z" stroke="#222" strokeDasharray="2 1.300" /><path d="M2 3h13v13H2z" fill="#fbe23f" stroke="#b99e12" /><Cursor x={10} y={9} /></I></Cell>
        <span className="-mr-[1px] flex"><Down /></span>
        <Cell><I s={26}><path d="M9 9h12v13H9z" fill="#fbe23f" stroke="#b99e12" /><Eps /></I></Cell>
        <span className="-mr-[2px] flex"><Down /></span>
        <Cell><I s={26}><path d="M2 2h13v14H2z" fill="#fbe23f" stroke="#b99e12" /><rect x="14" y="14" width="9" height="9" rx="1" fill="#d33" /><circle cx="18.500" cy="18.500" r="3" stroke="#fff" strokeWidth="1.300" /><path d="M16.500 20.500l4-4" stroke="#fff" /></I></Cell>
        <Cell><I s={24}><path d="M2 2h20v20H2z" fill="#fff" stroke="#4a7eb8" strokeWidth="1.500" /><path d="M2 2h20v4H2z" fill="#9bbfe6" stroke="#4a7eb8" /><path d="M4.500 9.500h4M10 9.500h4M16 9.500h4M4.500 13h4M10 13h4M16 13h4M4.500 16h4M10 16h4M16 16h4M4.500 19h4M10 19h4M16 19h4" stroke="#6f9bd1" strokeWidth="1.300" /></I></Cell>
        <Cell><I s={25}><path d="M2 1v22M22 1v22M2 4h20M2 11h20M2 18h20M1 23h22" stroke="#333" strokeWidth="1.300" /><g fill="#fff" strokeWidth="1.500"><circle cx="13" cy="4" r="2" stroke="#b22" /><circle cx="18" cy="4" r="2" stroke="#b22" /><circle cx="7" cy="11" r="2" stroke="#2a8a3a" /><circle cx="12" cy="11" r="2" stroke="#2a8a3a" /><circle cx="7" cy="18" r="2" stroke="#357" /><circle cx="17" cy="18" r="2" stroke="#357" /></g></I></Cell>
        <Cell><I s={24}><path d="M20 7V3H4.500l8 9-8 9H20v-4" stroke="#8a0f82" strokeWidth="3" strokeLinejoin="miter" /></I></Cell>
        <Cell><I s={25}><path d="M1 5.500h22M1.500 3v5M22.500 3v5" stroke="#345a82" strokeWidth="1.500" /><path d="M1 12h22v7H1z" fill="#ddd" stroke="#777" /><path d="M4 12v3M7 12v4M10 12v3M13 12v4M16 12v3M19 12v4" stroke="#444" /></I></Cell>
        <Down />
        <Cell><I s={25}><path d="M4 2h17q2 0 2 2v9q0 3-3 3h-9l-4 6v-6H5q-3 0-3-3V4q0-2 2-2z" fill="#fae98a" stroke="#c8a41c" strokeWidth="1.300" /></I></Cell>
        <Cell><I s={26}><path d="M2 5h15v14H2z" stroke="#777" strokeDasharray="1.500 1.500" /><path d="M11 4h3V1h3v6h-6z" fill="#fbe23f" stroke="#b99e12" /><Sun x={13} y={14} /></I></Cell>
        <span className="ml-[13px] w-[14px] font-['DejaVu_Sans_Condensed'] text-[15px] font-bold leading-none text-black">»</span>
        <VGrip className="ml-[6px]" />
        <span className="ml-[4px]"><I s={25}><path d="M2 1h20v22H2z" fill="#4d79ae" stroke="#1f2d3d" /><path d="M2 1h5v22H2z" fill="#22364c" /><text x="10" y="17" fontSize="14" fontWeight="bold" fontFamily="Liberation Serif" fill="#fff">?</text></I></span>
      </div>
      <div className="flex h-[39px] shrink-0 items-center border-b border-[#c3c3c3]">
        <VGrip className="ml-[6px]" />
        <Cell><I s={28}><path d="M1 21L10 3l3 2-8 16-4 2zM6 21l9-18 4 2-9 17-4 1z" fill="#a0a0a0" stroke="#888" /><path d="M17 20h7l-3.500 3.500z" fill="#888" /></I></Cell>
        <Cell><I s={26}><path d="M5 22l1-7L15 2l4 3-9 13z" fill="#f6dc52" stroke="#8c7617" /><path d="M5 22l1-7 4 3z" fill="#eccf9f" stroke="#8c7617" strokeWidth=".7" /><path d="M15 2l4 3 1.500-2-4-2.500z" fill="#bbb" stroke="#777" strokeWidth=".7" /></I></Cell>
        <Cell><Save gray><path d="M13 23l1-5 7-8 3 2-7 9z" fill="#bbb" stroke="#888" /></Save></Cell>
        <Cell><VLine c="#999"><Sun gray x={14} y={14} /></VLine></Cell>
        <Cell><I><path d="M4 20Q3 7 17 3" stroke="#999" strokeWidth="1.500" /><circle cx="4" cy="20" r="2" fill="#ddd" stroke="#999" /><circle cx="6" cy="9" r="2" fill="#ddd" stroke="#999" /><circle cx="18" cy="3" r="2" fill="#ddd" stroke="#999" /><Sun gray x={14} y={14} /></I></Cell>
        <span className="-mr-[1px] flex"><Down gray /></span>
        <Cell><I s={27}><path d="M2 4q4-4 9-2t10-1q3 3 1 7t-9 3-9-1-2-6z" fill="#c9c9c9" stroke="#8c8c8c" strokeWidth="1.500" /><path d="M8 11q0 5 5 7" stroke="#999" /><rect x="13" y="13" width="10" height="10" fill="#999" /><path d="M15 18h6M18.500 15.500L21 18l-2.500 2.500" stroke="#fff" strokeWidth="1.500" /></I></Cell>
        <Cell><I s={26}><path d="M3 21L8 6l13-3" stroke="#999" strokeWidth="1.300" /><circle cx="8" cy="6" r="2" fill="#ddd" stroke="#888" /><path d="M12 21l8-9M11 11l10 11" stroke="#8a8a8a" strokeWidth="2" /><path d="M10 13q0-4 4-4M18 11q3-1 4 2" stroke="#8a8a8a" strokeWidth="1.800" /></I></Cell>
        <Cell><I s={26}><path d="M2 5h20M9 4V1.500h6V4" stroke="#777" strokeWidth="2" /><path d="M4 7h16l-1 16H5z" fill="#bbb" stroke="#777" strokeWidth="1.500" /><path d="M8.500 9.500v11M12 9.500v11M15.500 9.500v11" stroke="#777" strokeWidth="1.500" /></I></Cell>
        <Cell><I s={25}><path d="M1 6l17 9M1 13l17-8" stroke="#777" strokeWidth="1.500" /><circle cx="20" cy="5" r="2.700" stroke="#777" strokeWidth="1.500" /><circle cx="20" cy="16" r="2.700" stroke="#777" strokeWidth="1.500" /></I></Cell>
        <Cell><I s={24}><path d="M3 2h9l3 3v13H3z" fill="#eee" stroke="#aaa" /><path d="M9 5h9l3 3v14H9z" fill="#eee" stroke="#aaa" /><path d="M11 11h7M11 14h7M11 17h7" stroke="#aaa" /></I></Cell>
        <Cell><I s={24}><path d="M4 3h16v20H4z" fill="#ddd" stroke="#999" strokeWidth="1.500" /><path d="M8 1h8v4H8z" fill="#aaa" /><path d="M6.500 7h11v14h-11z" fill="#eee" stroke="#aaa" /><path d="M8.500 11h7M8.500 14h7M8.500 17h7" stroke="#aaa" /></I></Cell>
        <VGrip className="ml-[5px] mr-[3px]" />
        <Cell><Label yellow /></Cell>
        <span className="flex w-[35px] shrink-0 justify-center"><span className="flex h-[26px] w-6 items-center justify-center border border-[#7eb0e6] bg-[#d3e4f6]"><Label yellow s={23}><path d="M16 13V7" stroke="#fff" strokeWidth="1.600" /><circle cx="17" cy="18" r="4.500" fill="#b91c1c" /></Label></span></span>
        <Cell><Label><path d="M17 15V7" stroke="#888" /><circle cx="17" cy="18" r="4.500" fill="#999" /></Label></Cell>
        <Cell><Label><path d="M7 18q7-7 15 0-8 6-15 0z" fill="#eee" stroke="#888" strokeWidth="1.200" /><circle cx="14.500" cy="18" r="2.300" fill="#888" /></Label></Cell>
        <Cell><Label><path d="M13 13h10v10H13z" fill="#a3a3a3" /><path d="M15 18h6M18.500 15.500L21 18l-2.500 2.500" stroke="#fff" strokeWidth="1.400" /></Label></Cell>
        <Cell><Label><path d="M13 13h10v10H13z" fill="#a3a3a3" /><circle cx="18" cy="18" r="2.800" stroke="#fff" strokeWidth="1.400" /></Label></Cell>
        <Cell><Label><path d="M13 13h10v10H13z" fill="#b3b3b3" /><path d="M15 22l6-7" stroke="#fff" strokeWidth="2" /></Label></Cell>
        <VGrip className="ml-[5px] mr-[3px]" />
        <Cell><span className="flex h-[20px] w-[22px] items-center justify-center border border-[#999] bg-white font-['DejaVu_Sans_Mono'] text-[9px] font-bold tracking-[-0.3px] text-[#333]">CSW</span></Cell>
        <VGrip className="ml-[4px] mr-[4px]" />
        <Cell><I s={27}><path d="M7 2q0-1.500 4-1.500t4 1.500v7q0 1.500-2 1.500H8q-2 0-2 2v3H3q-2 0-2-5 0-5 3-5h7V5H7z" fill="#33699e" /><path d="M17 6h2q3 0 3 5t-3 5h-7v.7h4V19q0 2-4.500 2T7 19v-5q0-2 2-2h5q3 0 3-2z" fill="#fbcf3c" /><circle cx="9" cy="2.700" r=".8" fill="#fff" /><path d="M17 15l6 3-6 4" stroke="#333" strokeWidth="1.500" /></I></Cell>
      </div>
    </>
  );
}

/* ---------- QGIS docks ---------- */

const Checker = ({ s = 20 }: { s?: number }) => <I s={s} vb="0 0 18 18"><path d="M0 0h18v12h-6v6H0z" fill="#6f93c4" /><path d="M0 0h6v6H0zM12 0h6v6h-6zM6 6h6v6H6zM0 12h6v6H0z" fill="#2b3a4e" /></I>;
const globe = <path d="M12 1v20M1.500 11h21M4 5q8 4 16 0M4 17q8-4 16 0M12 1q-9 10 0 20M12 1q9 10 0 20" strokeWidth="1" />;

const side: React.ReactNode[] = [
  <VLine><Plus /></VLine>,
  <I s={26}><path d="M1 1h19v19H1z" fill="#6f93c4" /><path d="M1 1h5v6H1zM13 1h7v6h-7zM6 7h7v6H6zM1 13h5v7H1z" fill="#26364b" /><Plus /></I>,
  <I s={26}><path d="M2 3q2-3 6-2 4-1 8 0 4 1 3 5t-3 4l-1 7q-3 3-5 0v-5q-2 2-3 0-6 2-5-9z" fill="#5b87bd" stroke="#2b4668" /><path d="M7 2q-1 5 1 9M14 11q-2-4 0-9" stroke="#2b4668" /><Plus /></I>,
  <I s={26}><path d="M1 23Q4 8 22 1q0 8-7 12-5 4-11 4" fill="#8fb4dd" stroke="#34506f" strokeWidth="1.200" /><path d="M3 18Q9 9 21 2" stroke="#34506f" /><Plus /></I>,
  <I s={26}><path d="M1 1q14-1 22 11l-6 1-16 9q4-10 0-21z" fill="#5b87bd" stroke="#2b4668" strokeWidth="1.200" /><path d="M7 2q4 8 2 14M13 4q4 5 2 10M18 7q2 3 2 6" stroke="#2b4668" /><Plus /></I>,
  <I s={26}><rect x="2" y="3" width="19" height="14" rx="5" fill="#6f9bd1" stroke="#26364b" strokeWidth="1.600" /><Plus /></I>,
  <I s={26}><rect x="2" y="3" width="19" height="14" rx="5" fill="#6f9bd1" stroke="#26364b" strokeWidth="1.200" /><path d="M5 4h5v4H5zM14 4h5v4h-5zM10 8h4v4h-4zM5 12h5v4H5zM14 12h5v4h-5z" fill="#26364b" /><Plus /></I>,
  <I s={26}><circle cx="12" cy="11" r="10.500" fill="#bcd5ee" stroke="#5b87bd" /><path d="M5 4l6 1-2 5-4 2zM13 3l6 3 1 6-4 1-3-4zM8 13l5 2-2 5-4-3z" fill="#4a75a8" /><g stroke="#fff">{globe}</g><Plus /></I>,
  <I s={26}><circle cx="12" cy="11" r="10" fill="#4a75a8" stroke="#26364b" strokeWidth="1.500" /><g stroke="#d9e6f4">{globe}</g><Plus /></I>,
  <I s={26}><circle cx="12" cy="11" r="10.500" fill="#e8f0f9" stroke="#7fa7d6" /><g stroke="#8fb4dd">{globe}</g><path d="M6 5l5 11 4-10 5-1" stroke="#222" strokeWidth="1.500" /><Plus /></I>,
  <I s={26}><path d="M10 2q6 0 6 6 0 8-10 10 5-3 5-6-5 0-5-5t4-5z" fill="#5b87bd" stroke="#2b4668" /><Plus /></I>,
  <I s={26}><path d="M2 2h20v20H2z" fill="#b0bfd0" stroke="#5a6f86" strokeWidth="1.500" /><path d="M4 3l5 13 6-12 6 0" stroke="#2b4668" strokeWidth="1.500" /><circle cx="9" cy="17" r="2" fill="#fff" stroke="#2b4668" /><Plus /></I>,
];
const Sat = ({ children }: Kids) => <I s={26}><path d="M3 3h7v6H3zM14 3h9v6h-9z" fill="#c8dcf2" stroke="#34506f" /><path d="M9 1h6v10H9z" fill="#5b87bd" stroke="#2b4668" /><path d="M3 12q0 7 8 8M5 12q1 5 7 6M7 12q1 3 5 4" stroke="#5a7da5" strokeWidth="1.200" />{children}</I>;

function SideBar() {
  return (
    <div className="flex h-[629px] w-[55px] shrink-0 flex-col items-center border-r border-[#bcbcbc]">
      <HGrip className="mt-[5px] h-[6px] w-12" />
      <div className="flex flex-col">
        {side.map((s, i) => <span key={i} className="flex h-[34px] items-center justify-center">{s}</span>)}
      </div>
      <span className="flex h-[34px] items-center gap-[6px] self-start pl-2"><VLine><Sun x={15} y={15} /></VLine><Down /></span>
      <span className="flex h-[35px] items-center"><Sat><Sun /></Sat></span>
      <HGrip className="mt-[4px] h-[6px] w-12" />
      <span className="mt-px flex h-[34px] items-center"><I s={24}><path d="M14 0v24M0 14h24" stroke="#444" strokeWidth=".9" /><circle cx="14" cy="14" r="4.500" stroke="#d33" strokeWidth="1.200" strokeDasharray="4 2" /></I></span>
      <span className="flex h-[35px] items-center"><I s={26}><circle cx="10" cy="3" r="2" stroke="#777" /><path d="M9 5L3 9h9M9 6q-6 7-1 13M11 5l3 6" stroke="#666" strokeWidth="1.200" /><rect x="13" y="13" width="11" height="10" rx="1" fill="#34495e" /><path d="M18 15h-2.500v6H18M22 18h-4M20 16l-2 2 2 2" stroke="#fff" /></I></span>
      <span className="flex h-[37px] items-center"><Sat /></span>
      <svg className="ml-[-12px] mt-[10px]" width="8" height="9" viewBox="0 0 8 9" fill="none" stroke="#000" strokeWidth="1.500"><path d="M1 .8l3 2.500L7 .8M1 4.800l3 2.500 3-2.500" /></svg>
    </div>
  );
}

function DockTitle({ title }: { title: string }) {
  return (
    <div className="flex h-5 shrink-0 items-center pl-[2px]">
      <HGrip className="h-[6px] w-[96px]" />
      <span className="grow text-center text-[12.500px] leading-5">{title}</span>
      <HGrip className="h-[6px] w-[94px]" />
      <span className="ml-[3px] flex h-[15px] w-[15px] items-center justify-center rounded-[3px] border border-[#777] bg-[#f7f7f7]"><svg width="9" height="9" fill="none" stroke="#000"><path d="M2.500 4V.5h6v5H6" /><path d="M.5 3.500h5v5h-5z" strokeWidth="1.300" /></svg></span>
      <span className="ml-[1px] flex h-[15px] w-[15px] items-center justify-center rounded-[3px] border border-[#777] bg-[#f7f7f7]"><svg width="9" height="9"><path d="M1 1l7 7M8 1L1 8" stroke="#000" strokeWidth="1.500" /></svg></span>
    </div>
  );
}

const Poly = ({ blue = false }: { blue?: boolean }) => <svg width="21" height="15" viewBox="0 0 21 15"><path d="M1.500 2.500Q3 0 6 2q4 2 7 .5Q18 0 20 2q0 4-1 5 1 3 0 5-3 0-5-1.500-3-1-5 1-4 3.500-6 2-2-2-.5-5.500-1.500-3-1-5.500z" fill={blue ? "#a9cdec" : "#e2e2e2"} stroke={blue ? "#5b87bd" : "#888"} strokeWidth="1.300" /></svg>;
const sbBtn = "flex h-4 w-4 shrink-0 items-center justify-center rounded-[2px] border border-[#8c8c8c] bg-gradient-to-b from-white to-[#ececec]";
const Tri = ({ d }: { d: string }) => <svg width="8" height="8" viewBox="0 0 8 8"><path d={d} fill="#000" /></svg>;

function BrowserPanel() {
  return (
    <div className="flex h-[151px] shrink-0 flex-col">
      <DockTitle title="Browser Panel" />
      <div className="mt-[6px] flex h-[32px] shrink-0 items-start gap-[9px] pl-[7px]">
        <I s={18}><path d="M2 2h17v17H2z" stroke="#777" strokeWidth="1.300" /><circle cx="19" cy="19" r="4" fill="#6aa05a" /><path d="M19 17v4M17 19h4" stroke="#fff" strokeWidth="1.300" /></I>
        <Refresh s={18} /><Funnel /><Tree /><Info s={18} />
      </div>
      <div className="flex h-[93px] w-[316px] shrink-0 flex-col rounded-[2px] border border-[#b0b0b0]">
        <div className="flex h-[75px] shrink-0">
          <div className="flex grow flex-col overflow-hidden bg-white pt-px">
            {["ATG_adm0.csv", "ATG_adm0.shp", "ATG_adm1.csv", "ATG_adm1.shp"].map((n, i) => (
              <div key={n} className={"flex h-5 shrink-0 items-center " + (i === 3 ? "bg-[#eee]" : "")}>
                <span className="ml-[-8px] h-5 w-5 border-r border-dotted border-[#999]" /><span className="h-5 w-5 border-r border-dotted border-[#999]" /><span className="h-5 w-5 border-r border-dotted border-[#999]" /><span className="h-5 w-5 border-r border-dotted border-[#999]" /><span className="h-5 w-5 border-r border-dotted border-[#999]" />
                <span className="mr-[3px] w-[9px] border-t border-dotted border-[#999]" />
                <span className="pb-[3px]"><Poly blue={i === 3} /></span>
                <span className="ml-[5px] text-[12.500px]">{n}</span>
              </div>
            ))}
          </div>
          <div className="flex w-4 shrink-0 flex-col">
            <span className={sbBtn}><Tri d="M0 6h8L4 2z" /></span>
            <span className="h-[27px] rounded-[2px] border border-[#999] bg-gradient-to-r from-white to-[#e4e4e4]" />
            <span className={sbBtn}><Tri d="M0 6h8L4 2z" /></span>
            <span className={sbBtn}><Tri d="M0 2h8L4 6z" /></span>
          </div>
        </div>
        <div className="flex h-4 shrink-0">
          <span className={sbBtn}><Tri d="M6 0v8L2 4z" /></span>
          <span className="flex w-[166px] items-center justify-center rounded-[2px] border border-[#999] bg-gradient-to-b from-white to-[#ddd]"><HGrip className="h-[11px] w-[18px]" /></span>
          <span className="w-[84px] bg-[#f4f4f4]" />
          <span className={sbBtn}><Tri d="M6 0v8L2 4z" /></span>
          <span className={sbBtn}><Tri d="M2 0v8l4-4z" /></span>
        </div>
      </div>
    </div>
  );
}

function LayerRow({ name, on, icon, sel, last, h }: { name: string; on?: boolean; icon: React.ReactNode; sel?: boolean; last?: boolean; h: string }) {
  return (
    <div className={`flex shrink-0 items-center ${h} ` + (sel ? "bg-[#3399ff] text-white" : "text-black")}>
      <span className="ml-[10px] flex h-full w-[13px] flex-col"><span className="h-1/2 w-[10px] border-b border-l border-dotted border-[#999]" />{!last && <span className="h-1/2 border-l border-dotted border-[#999]" />}</span>
      <span className="flex h-[15px] w-[15px] shrink-0 items-center justify-center border border-[#c4c4c4] bg-white">{on && <svg width="13" height="13"><path d="M1.500 1.500l10 10M11.500 1.500l-10 10" stroke="#000" strokeWidth="3" /></svg>}</span>
      <span className="ml-[7px] flex w-5 shrink-0 items-center">{icon}</span>
      <span className={"flex h-full grow items-center whitespace-nowrap text-[12.800px] font-bold " + (sel ? "ml-[1px] border border-dotted border-[#b5651d] pl-[2px]" : last ? "ml-[4px]" : "ml-[6px]")}>
        <span className={sel ? "underline" : ""}>{name}</span>
      </span>
    </div>
  );
}

function LayersPanel() {
  return (
    <div className="flex h-[151px] shrink-0 flex-col">
      <DockTitle title="Layers Panel" />
      <div className="mt-[6px] flex h-[32px] shrink-0 items-start gap-[9px] pl-[7px] pt-px">
        <I s={18}><path d="M2 8h12v14H2zM6 5h12v14M14 1v16M10 6q0-4 4-5 4 1 4 5" stroke="#666" strokeWidth="1.200" /><circle cx="19" cy="20" r="4" fill="#6aa05a" /><path d="M19 18v4M17 20h4" stroke="#fff" strokeWidth="1.300" /></I>
        <I s={18}><path d="M0 11q10-10 22 0-11 9-22 0z" fill="#fff" stroke="#666" strokeWidth="1.500" /><circle cx="11" cy="11" r="4.500" fill="#4a75a8" /><path d="M14 18h10l-5 5z" fill="#000" /></I>
        <Funnel />
        <span className="flex w-[35px] items-center gap-[6px]"><I s={17}><Eps /><path d="M12 13h11l-3 3v7h-5v-7z" fill="#aaa" stroke="#888" /></I><Down /></span>
        <Tree up={false} /><Tree />
        <I s={18}><path d="M2 2h17v17H2z" stroke="#777" strokeWidth="1.300" /><rect x="14" y="16" width="9" height="7" rx="1" fill="#e2474a" /><path d="M16 19.500h5" stroke="#fff" strokeWidth="1.500" /></I>
      </div>
      <div className="flex h-[93px] w-[316px] shrink-0 flex-col rounded-[2px] border-2 border-[#55a5f2] bg-white">
        <LayerRow h="h-[20px]" name="Antigua 1824" icon={<Checker />} />
        <LayerRow h="h-4" name="ATG_roads" on sel icon={<span className="h-px w-[18px] bg-[#4a2fa8]" />} />
        <LayerRow h="h-[20px]" name="Antigua 1775" icon={<Checker />} />
        <LayerRow h="h-[18px]" name="ATG_adm1" on last icon={<span className="h-[18px] w-[18px] border border-black bg-[#10c58b]" />} />
      </div>
    </div>
  );
}

const input = "h-[22px] rounded-[2px] border border-[#b4b4b4] bg-white";
const btn = "flex items-center justify-center rounded-[2px] border border-[#acacac] bg-gradient-to-b from-[#fafafa] to-[#dcdcdc]";
const Pick = () => (
  <span className="flex h-[30px] w-[30px] items-center justify-center rounded-[2px] border border-[#8c8c8c] bg-gradient-to-b from-white to-[#e4e4e4]">
    <I s={20}><path d="M9 1l3 3 3-3-1.500 7.500v2h2L23 9l-3 3 3 3-7.500-1.500h-2v2L15 23l-3-3-3 3 1.500-7.500v-2h-2L1 15l3-3-3-3 7.500 1.500h2v-2z" fill="#3a90d0" /><circle cx="12" cy="12" r="3" fill="#e02a2a" /></I>
  </span>
);

function PathPanel() {
  return (
    <div className="flex h-[305px] shrink-0 flex-col">
      <DockTitle title="Shortest path" />
      <div className="ml-[9px] flex w-[299px] flex-col">
        <span className="mt-[9px] h-[18px] leading-[18px]">Start</span>
        <div className="mt-[3px] flex h-[30px] items-center justify-between"><span className={input + " w-[262px]"} /><Pick /></div>
        <span className="mt-[6px] h-[18px] leading-[18px]">Stop</span>
        <div className="mt-[3px] flex h-[30px] items-center justify-between"><span className={input + " w-[262px]"} /><Pick /></div>
        <div className="mt-[7px] flex h-[22px] items-center justify-between">
          <span>Criterion</span>
          <span className="flex h-[22px] w-[147px] items-center rounded-[2px] border border-[#acacac] bg-gradient-to-b from-[#fafafa] to-[#dcdcdc] pl-1"><span className="grow">Length</span><span className="flex h-full w-4 items-center justify-center border-l border-[#acacac]"><svg width="8" height="4"><path d="M0 0h8L4 4z" /></svg></span></span>
        </div>
        <div className="mt-[7px] flex h-[22px] items-center"><span className="w-[43px] tracking-[-0.2px]">Length</span><span className={input + " grow"} /></div>
        <div className="mt-[7px] flex h-[22px] items-center"><span className="w-[34px]">Time</span><span className={input + " grow"} /></div>
        <div className="mt-[9px] flex h-7 justify-between"><span className={btn + " w-[93px]"}>Calculate</span><span className={btn + " w-[93px]"}>Export</span><span className={btn + " w-[93px]"}>Clear</span></div>
        <div className={btn + " mt-[9px] h-[31px] gap-1"}>
          <I s={21}><circle cx="12" cy="12" r="8" stroke="#f7f7f7" strokeWidth="6" /><path d="M3 3l6 6M21 3l-6 6M3 21l6-6M21 21l-6-6" stroke="#ea3b3b" strokeWidth="5" /><g fill="#fff" stroke="#b33" strokeWidth="1.200"><circle cx="3" cy="3" r="2.200" /><circle cx="21" cy="3" r="2.200" /><circle cx="3" cy="21" r="2.200" /><circle cx="21" cy="21" r="2.200" /></g></I>
          Help
        </div>
      </div>
    </div>
  );
}

/* ---------- map ---------- */

function MapCanvas() {
  return (
    <div className="h-[629px] w-[814px] shrink-0 border border-[#b5b5b5] bg-white">
      <svg width="812" height="627" viewBox="388 195 812 627" strokeLinejoin="round" fill="none">
        <defs>
          <filter id="coast" x="-5%" y="-5%" width="110%" height="110%">
            <feTurbulence type="fractalNoise" baseFrequency="0.28" numOctaves="2" seed="4" />
            <feDisplacementMap in="SourceGraphic" scale="5" xChannelSelector="R" yChannelSelector="G" />
          </filter>
        </defs>
        <g transform="translate(639.5 480) scale(.335 .3355)" stroke="#000" strokeWidth="4" fill="#10c58b">
          <g filter="url(#coast)">
            <path d="M245 80l17 8 14-3 14 1 22-1 4 15 10 7 12 3 0 12 5 8 13 10 4 8 9 2 8 6-4 10-8 2-3 12-6 6-10-6-4 8 6 6 10-4 14 8-4 14 5 6 14-8 13 6 8-2-2-16-10-2 10-10 16-8 6-16 10 4-2 16-6 10-4 16 12 8 14-2 14 8 16 4 14-4 14-4-4 10-20 6-16 8-2 10 16-2 10 6 16-12 12 4-4-14 14-4 8 10 16 4 18-4 16 3-8 12-2 12-6 14-14-8-10 8-14 4-6 12-18 12 18-5 18 8 18 4 12-6 12 10 2 18-4 14 2 10-10 6-2 14-12 4-6 12-18 4-26 2-26-12-26-12-18-4 4 20 6 12 12 10 2 14-6 8 4 18-10 4 2 10-16-6-10 8-14 0-18-4-14-6-16 0-4-10 12-4 6-12 8-16-18 0-14 4-8 12 2 16-12-8-22-6-20-2-6 10-20 6-26 6 2-24-14 4-4-4-14 2-14-4-16-10-22-2-20-2-18-6-8-10-8-20-2-24 8-12 10-10-2-16-18-12 24 2-6-14-20-2-26-2 2-10 16-4 24-8 18 4 10-22 2-12-22 0-18-2-22 8-10 0 4-18 8-12-2-14 16-4 8-14 14-2 18 6 12 4 14-8 18 14 22 4-4-10-12-8-22-6 12-18 2-22 8-12 12-8 4-22 20-8z" />
            <path d="M408 106l8-2 8 6 14 6-8 6-20 8-10-2zM438 208l2-12 20-4 16-12 8-8 14 4-2 8-12 12-20 6zM598 304l12 2 12-1 13 7-12 5-10-6-12 1z" />
            <path d="M395 132l4 12M484 132q4 6-2 12M470 158l6 8M604 344l8 4M480 228l12-6M100 304l26 2M108 298l8 14M518 238l20 10 30-6M546 250l26 4M550 242l-8 22M588 340l10 8M586 356l8 10M562 368l10 6" strokeWidth="6" />
          </g>
          <g fill="none">
            <path d="M312 86l2 26-8 4-28 4v26l18 6 2 48 6 16-10 48 14 20 22 2-4 36M372 216h-22l2 20 6 26-24 8-6 20-2 32 64 8 20-8h26l10-32 4-20 14-4 2-26 6-4M436 322l8 46M326 322l-16 2-32 26 16 30-2 54M278 350l-16-16-48 14-2-30 8-18 18-30-12-12-40-8-28-28-8 14" />
            <g stroke="#5a28a0" strokeWidth="3.500">
              <path d="M228 214l2-34 16-36 20-38 14-8h32l14 22 2 30-12 20-20 16-10 14-56-6M286 200l24 20 40 20 40 26 40 6 40-2 56 4 26-10 38-22M466 270l-2 30 8 20v34l28 28 20-10h30l40-20" />
              <path d="M212 220l16-6 4 8 38 38 26 16 28 38 6 26-2 22 30 42 30 12M328 362l-34-4-16 14-18 6-22 20-14 26-44-12-40-6-24-14v-26l10-26 58-36 32-48-4-36" />
            </g>
          </g>
        </g>
        <g transform="translate(680 190) scale(.3333)" stroke="#000" strokeWidth="4" fill="#10c58b">
          <path d="M62 10l0 18 6 8 16-10 22-14M136 12l20 8 20 12 12 16 24 4 26 10 16 14 14 22 4 18 8-10 0-16 14 2 26 8 20 14 4-6-16-16-2-10 6-8-4-12 4-20 4-16-2-16" />
          <circle cx="345" cy="114" r="5" /><path d="M184 16l12 4 20 16 28 8 36 2 40-10 22-20" fill="none" stroke="#5a28a0" strokeWidth="3.500" />
        </g>
        <path d="M596 634.500h2" stroke="#444" />
      </svg>
    </div>
  );
}

function StatusBar() {
  return (
    <div className="flex h-[35px] shrink-0 items-center text-[12.500px]">
      <span className="ml-[385px] w-[65px] whitespace-nowrap">Coordinate</span>
      <span className={input + " flex w-[109px] items-center whitespace-nowrap pl-[9px]"}>-62.038,16.797</span>
      <span className="ml-px flex h-[29px] w-[20px] items-center justify-center rounded-[3px] border border-[#777] bg-gradient-to-b from-white to-[#ddd]"><I s={18}><path d="M4 6q4-5 8 0l3 8q-3 5-8 1z" fill="#eee" stroke="#222" strokeWidth="1.800" /><path d="M12 5l6 8M9 12l9 9M3 14l9 8" stroke="#222" strokeWidth="1.500" /><ellipse cx="16" cy="17" rx="4" ry="5" stroke="#222" strokeWidth="1.800" /><path d="M5 8l6 5M7 5l5 5" stroke="#222" /></I></span>
      <span className="ml-[9px] w-[40px]">Scale</span>
      <span className={input + " flex w-[97px] items-center pl-1"}><span className="grow">1:567,368</span><span className="flex h-full w-4 items-center justify-center border-l border-[#b4b4b4] bg-gradient-to-b from-white to-[#ddd]"><svg width="8" height="5"><path d="M0 0h8L4 5z" /></svg></span></span>
      <span className="ml-[10px] w-[56px] whitespace-nowrap">Rotation</span>
      <span className="flex h-[28px] w-[107px] items-center rounded-[2px] border border-[#b4b4b4] bg-white pl-[4px]"><span className="grow pt-[2px]">0.0</span><span className="flex h-full w-[16px] flex-col border-l border-[#b4b4b4] bg-[#f2f2f2]"><span className="flex h-1/2 items-center justify-center border-b border-[#b4b4b4]"><Tri d="M0 6h8L4 2z" /></span><span className="flex h-1/2 items-center justify-center"><Tri d="M0 2h8L4 6z" /></span></span></span>
      <span className="ml-[7px] flex h-[15px] w-[15px] items-center justify-center border border-[#bbb] bg-white"><svg width="11" height="11"><path d="M1 1l9 9M10 1l-9 9" stroke="#000" strokeWidth="3" /></svg></span>
      <span className="ml-[6px] w-[58px]">Render</span>
      <I s={21}><circle cx="12" cy="12" r="10" fill="#8a8a8a" stroke="#222" strokeWidth="2.500" /><path d="M12 2v20M2 12h20M12 2q-8 10 0 20M12 2q8 10 0 20M4.500 6q7.500 4 15 0M4.500 18q7.500-4 15 0" stroke="#222" strokeWidth="1.300" /><path d="M9.500 8.500h5l2 3.500-2 3.500h-5L7.500 12z" fill="#eee" /></I>
      <span className="ml-[3px] whitespace-nowrap tracking-[0.1px]">EPSG:4601 (OTF)</span>
      <I s={22} className="ml-auto mr-[25px]"><path d="M12 3C6 3 1.500 6.500 1.500 11.500S6 20 12 20h3l5 3-1-5q3.500-2.500 3.500-6.500C22.500 6.500 18 3 12 3z" fill="#606060" /><g fill="#fff"><circle cx="7" cy="11.500" r="1.500" /><circle cx="12" cy="11.500" r="1.500" /><circle cx="17" cy="11.500" r="1.500" /></g></I>
      <svg className="shrink-0 self-end" width="12" height="12"><path d="M1 12L12 1M5 12l7-7M9 12l3-3" stroke="#888" strokeWidth="1.300" /></svg>
    </div>
  );
}

const menus = ["Project", "Edit", "View", "Layer", "Settings", "Plugins", "Vector", "Raster", "Database", "Web", "Processing", "Help"];

function QgisWindow() {
  return (
    <div className="absolute left-[8px] top-[52px] flex h-[806px] w-[1194px] flex-col bg-[#efefef] font-['DejaVu_Sans_Condensed','DejaVu_Sans'] text-[12.500px] text-black shadow-[0_6px_18px_2px_rgba(0,0,0,0.38)]">
      <div className="flex h-[39px] shrink-0 items-center bg-white pl-[11px]">
        <QLogo s={18} />
        <span className="ml-[6px] whitespace-nowrap font-['Open_Sans'] text-[14.500px] tracking-[-0.1px]">QGIS 2.14.0-Essen - Antigua QGIS</span>
        <svg className="ml-auto mr-[24px]" width="131" height="14" viewBox="0 0 131 14" fill="none" stroke="#000"><path d="M0 6.500h12M58.500 1.500h11v11h-11zM118.500 1l12 12M130.500 1l-12 12" /></svg>
      </div>
      <div className="flex h-[25px] shrink-0 items-center gap-[15.200px] pl-[11px] pt-px">
        {menus.map((m) => <span key={m} className="whitespace-nowrap">{m}</span>)}
      </div>
      <Toolbars />
      <div className="flex h-[629px] shrink-0">
        <SideBar />
        <div className="flex w-[324px] shrink-0">
          <div className="ml-[1px] mt-[1px] flex w-[316px] shrink-0 flex-col">
            <BrowserPanel />
            <div className="flex h-[8px] shrink-0 items-center justify-center"><HGrip className="h-[3px] w-[103px]" /></div>
            <LayersPanel />
            <div className="flex h-[8px] shrink-0 items-center justify-center"><HGrip className="h-[3px] w-[103px]" /></div>
            <PathPanel />
          </div>
          <span className={"ml-[3px] mt-[210px] h-[203px] w-[3px] " + dots} />
        </div>
        <MapCanvas />
      </div>
      <StatusBar />
    </div>
  );
}

export default function App() {
  return (
    <div className="relative flex h-[1080px] w-[1920px] flex-col overflow-hidden">
      <TabStrip />
      <AddressBar />
      <WebPage />
      <Shelf />
      <Taskbar />
      <QgisWindow />
    </div>
  );
}
